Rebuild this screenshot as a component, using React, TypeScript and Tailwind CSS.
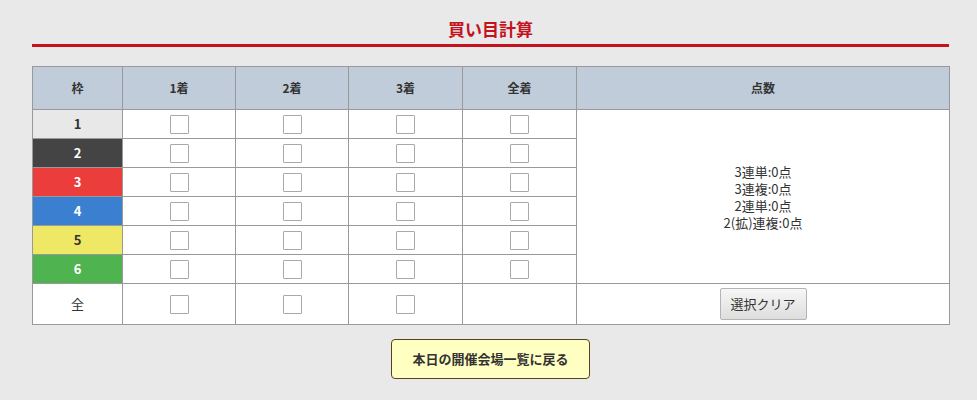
import { useState } from "react";

const FRAMES = [
  { no: 1, cls: "bg-[#e8e8e8] text-[#333]" },
  { no: 2, cls: "bg-[#444444] text-white" },
  { no: 3, cls: "bg-[#ec3d3d] text-white" },
  { no: 4, cls: "bg-[#3b80d0] text-white" },
  { no: 5, cls: "bg-[#efe865] text-[#333]" },
  { no: 6, cls: "bg-[#4fb34f] text-white" },
];

const HEADS = ["1着", "2着", "3着", "全着"];

function Box() {
  const [on, setOn] = useState(false);
  return (
    <button
      type="button"
      onClick={() => setOn(!on)}
      className={[
        "mx-auto block h-[19px] w-[19px] rounded-[1px] border border-[#a9a9a9]",
        on ? "bg-[#3b80d0]" : "bg-white",
      ].join(" ")}
    />
  );
}

export default function App() {
  return (
    <div
      className="min-h-[400px] bg-[#e9e9e9] pt-[18px] text-[12px] text-[#333]"
      style={{ fontFamily: '"Noto Sans CJK JP", "Noto Sans", sans-serif' }}
    >
      <div className="ml-[32px] w-[917px]">
        <h1 className="border-b-[3px] border-[#c4121f] pb-[4px] text-center text-[17px] font-bold leading-[22px] text-[#c4121f]">
          買い目計算
        </h1>

        <table className="mt-[19px] w-[917px] table-fixed border-collapse bg-white">
          <colgroup>
            <col className="w-[90px]" />
            <col className="w-[113px]" />
            <col className="w-[113px]" />
            <col className="w-[114px]" />
            <col className="w-[114px]" />
            <col className="w-[373px]" />
          </colgroup>
          <thead>
            <tr className="h-[43px] bg-[#c1ccda]">
              <th className="border border-[#999] font-bold">枠</th>
              {HEADS.map((h) => (
                <th key={h} className="border border-[#999] font-bold">
                  {h}
                </th>
              ))}
              <th className="border border-[#999] font-bold">点数</th>
            </tr>
          </thead>
          <tbody>
            {FRAMES.map((f, i) => (
              <tr key={f.no} className="h-[29px]">
                <td className={`border border-[#999] p-0 text-center text-[13px] font-bold ${f.cls}`}>
                  {f.no}
                </td>
                {HEADS.map((h) => (
                  <td key={h} className="border border-[#999] p-0">
                    <Box />
                  </td>
                ))}
                {i === 0 && (
                  <td rowSpan={6} className="border border-[#999] text-center text-[13px] leading-[17px]">
                    <div>3連単:0点</div>
                    <div>3連複:0点</div>
                    <div>2連単:0点</div>
                    <div>2(拡)連複:0点</div>
                  </td>
                )}
              </tr>
            ))}
            <tr className="h-[41px]">
              <td className="border border-[#999] text-center text-[13px]">全</td>
              <td className="border border-[#999] p-0">
                <Box />
              </td>
              <td className="border border-[#999] p-0">
                <Box />
              </td>
              <td className="border border-[#999] p-0">
                <Box />
              </td>
              <td className="border border-[#999]" />
              <td className="border border-[#999] text-center">
                <button
                  type="button"
                  className="h-[32px] w-[87px] rounded-[2px] border border-[#b4b4b4] bg-gradient-to-b from-[#f6f6f6] to-[#dedede] text-[13px] text-[#333]"
                >
                  選択クリア
                </button>
              </td>
            </tr>
          </tbody>
        </table>

        <div className="mt-[14px] flex justify-center">
          <button
            type="button"
            className="h-[40px] w-[199px] rounded-[4px] border border-[#5a4020] bg-[#ffffc2] text-[13px] font-bold text-[#333]"
          >
            本日の開催会場一覧に戻る
          </button>
        </div>
      </div>
    </div>
  );
}
